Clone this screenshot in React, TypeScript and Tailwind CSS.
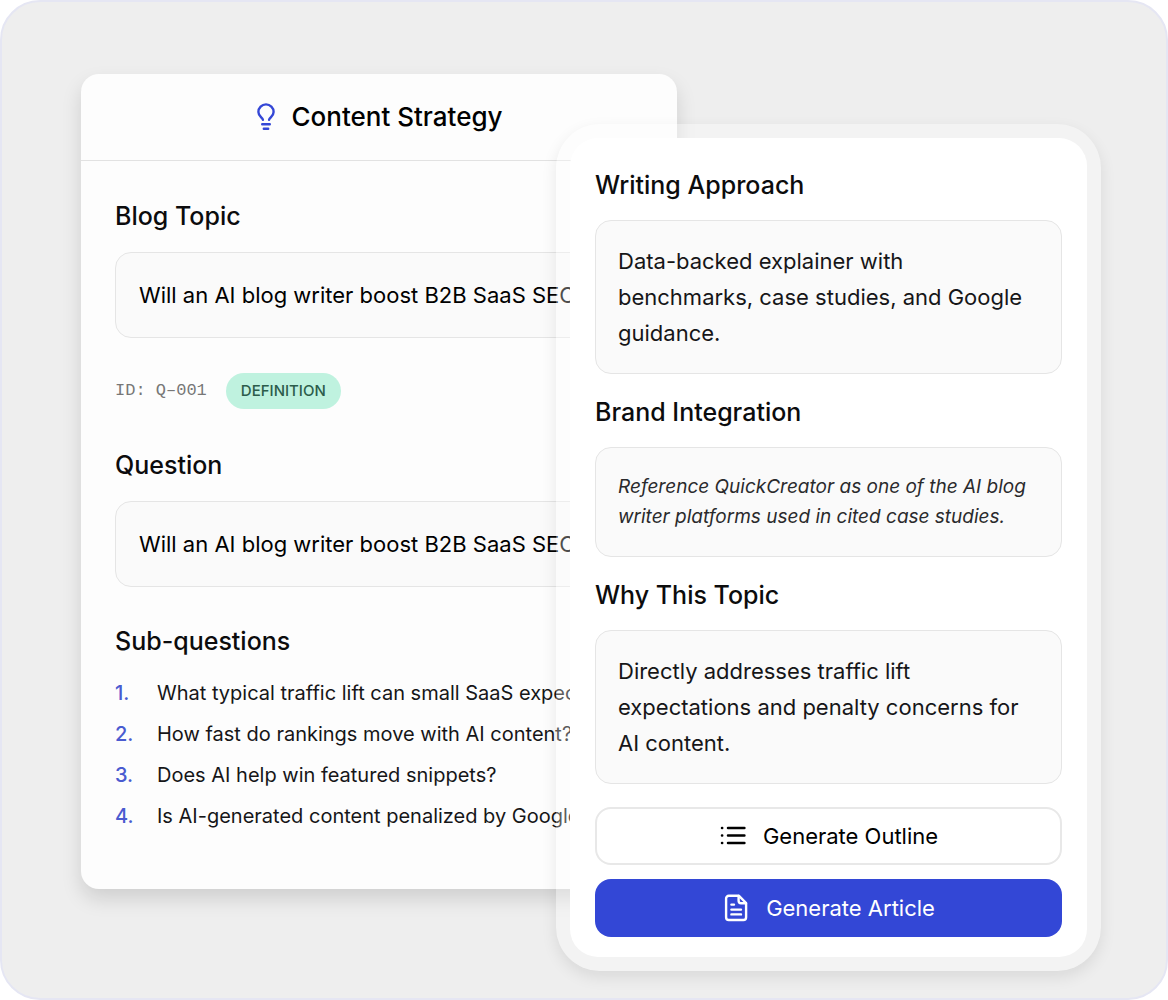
import React from "react";

const subQuestions = [
  "What typical traffic lift can small SaaS expect?",
  "How fast do rankings move with AI content?",
  "Does AI help win featured snippets?",
  "Is AI-generated content penalized by Google?"
];

const BulbIcon = () => (
  <svg
    className="w-5 h-7 shrink-0 text-[#3447d6]"
    viewBox="0 0 20 28"
    fill="none"
    stroke="currentColor"
    strokeWidth="2.4"
    strokeLinecap="round"
    aria-hidden="true"
  >
    <path d="M6.9 16.8C6.3 14.6 2.4 13.2 2.4 9a7.6 7.6 0 0 1 15.2 0c0 4.2-3.9 5.6-4.5 7.8" />
    <path d="M6.2 21.2h7.6M7.8 25.8h4.4" />
  </svg>
);

const OutlineIcon = () => (
  <svg
    className="w-7 h-6 shrink-0"
    viewBox="0 0 28 24"
    fill="none"
    stroke="currentColor"
    strokeWidth="2.5"
    strokeLinecap="round"
    aria-hidden="true"
  >
    <path d="M9 4h16.4M9 11.5h16.4M9 19h16.4" />
    <path d="M3 4h.2M3 11.5h.2M3 19h.2" />
  </svg>
);

const ArticleIcon = () => (
  <svg
    className="w-7 h-7 shrink-0"
    viewBox="0 0 28 28"
    fill="none"
    stroke="currentColor"
    strokeWidth="2.4"
    strokeLinecap="round"
    strokeLinejoin="round"
    aria-hidden="true"
  >
    <path d="M17 1.8H6.8A2.7 2.7 0 0 0 4.1 4.5v18.8A2.7 2.7 0 0 0 6.8 26h14.6a2.7 2.7 0 0 0 2.7-2.7V9Z" />
    <path d="M16.6 2v4.8A2.4 2.4 0 0 0 19 9.2h5" />
    <path d="M9.4 10.6h2.6M9.4 15.6h9.6M9.4 20.4h9.6" />
  </svg>
);

const Heading = ({ children }: { children: React.ReactNode }) => (
  <h3 className="text-[25px] leading-9 font-medium text-[#0c0c0d] whitespace-nowrap">
    {children}
  </h3>
);

const TopicBox = ({ children }: { children: React.ReactNode }) => (
  <p className="mt-[18px] h-[86px] flex items-center px-[23px] rounded-2xl border border-[#e5e5e5] bg-[#fafafa] text-[22px] text-black whitespace-nowrap overflow-hidden">
    {children}
  </p>
);

const NoteBox = ({ children }: { children: React.ReactNode }) => (
  <p className="mt-[17px] px-[22px] py-[22px] rounded-2xl border border-[#e5e5e5] bg-[#fafafa] text-[22px] leading-9 text-[#161618]">
    {children}
  </p>
);

const StrategyCard = () => (
  <section className="grow-[596] basis-0 min-w-0 rounded-[18px] bg-[#fdfdfd] shadow-[0_10px_20px_rgba(0,0,0,0.13)]">
    <header className="h-[87px] flex items-center justify-center gap-4 border-b border-[#e2e2e2]">
      <BulbIcon />
      <h2 className="text-[26px] leading-9 font-medium text-black">Content Strategy</h2>
    </header>
    <div className="px-[34px] pt-[37px] pb-[58px]">
      <Heading>Blog Topic</Heading>
      <TopicBox>Will an AI blog writer boost B2B SaaS SEO?</TopicBox>

      <div className="mt-[35px] mb-[38px] flex items-center gap-[19px]">
        <span className="font-['Liberation_Mono',monospace] text-[17px] text-[#777]">
          ID: Q–001
        </span>
        <span className="h-9 px-[15px] flex items-center rounded-full bg-[#bff2df] text-[15px] font-medium text-[#2c5c4b]">
          DEFINITION
        </span>
      </div>

      <Heading>Question</Heading>
      <TopicBox>Will an AI blog writer boost B2B SaaS SEO?</TopicBox>

      <div className="mt-9">
        <Heading>Sub-questions</Heading>
        <ol className="mt-[19px] flex flex-col gap-[11px]">
          {subQuestions.map((q, i) => (
            <li
              key={q}
              className="flex text-[20px] leading-[30px] text-[#161618] whitespace-nowrap overflow-hidden"
            >
              <span className="w-[42px] shrink-0 font-medium text-[#4a5bd0]">{i + 1}.</span>
              {q}
            </li>
          ))}
        </ol>
      </div>
    </div>
  </section>
);

const ApproachCard = () => (
  <section className="relative grow-[517] basis-0 min-w-0 mt-[50px] -ml-[121px] p-[14px] rounded-[44px] bg-white/30 shadow-[0_6px_16px_rgba(0,0,0,0.09)]">
    <div className="rounded-[28px] bg-white pt-[29px] px-[25px] pb-5">
      <Heading>Writing Approach</Heading>
      <NoteBox>Data-backed explainer with benchmarks, case studies, and Google guidance.</NoteBox>

      <div className="mt-5">
        <Heading>Brand Integration</Heading>
        <p className="mt-[17px] px-[22px] py-6 rounded-2xl border border-[#e5e5e5] bg-[#fafafa] text-[19px] leading-[30px] italic text-[#2a2a2c]">
          Reference QuickCreator as one of the AI blog writer platforms used in cited case studies.
        </p>
      </div>

      <div className="mt-5">
        <Heading>Why This Topic</Heading>
        <NoteBox>
          Directly addresses traffic lift expectations and penalty concerns for AI content.
        </NoteBox>
      </div>

      <div className="mt-[23px] flex flex-col gap-[14px]">
        <button
          type="button"
          className="h-[58px] flex items-center justify-center gap-4 rounded-2xl border-2 border-[#e8e8e8] bg-white text-[22px] text-black"
        >
          <OutlineIcon />
          Generate Outline
        </button>
        <button
          type="button"
          className="h-[58px] flex items-center justify-center gap-4 rounded-2xl bg-[#3347d6] text-[22px] text-white"
        >
          <ArticleIcon />
          Generate Article
        </button>
      </div>
    </div>
  </section>
);

export default function App() {
  return (
    <main className="min-h-screen flex items-start rounded-[40px] border-2 border-[#e5e6f3] bg-[#eeeeee] pt-[72px] pl-[79px] pr-[65px] pb-[27px] font-['Inter',sans-serif]">
      <StrategyCard />
      <ApproachCard />
    </main>
  );
}
